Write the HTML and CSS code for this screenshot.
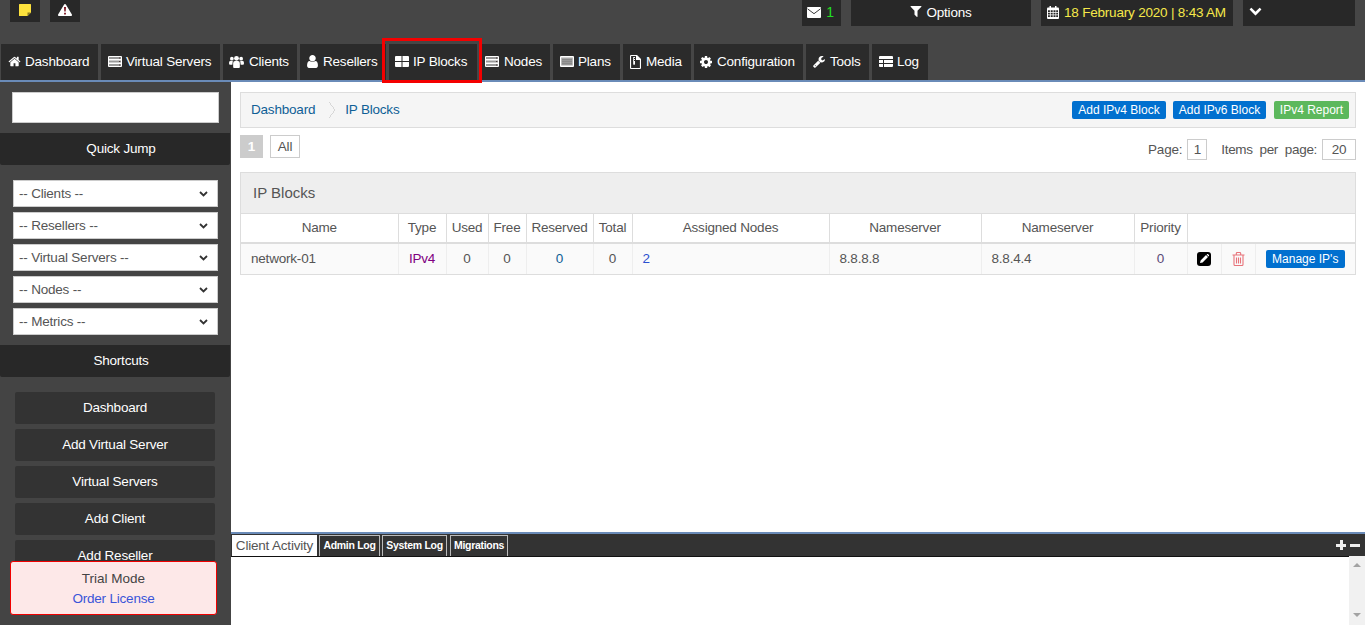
FILE: index.html
```html
<!DOCTYPE html>
<html lang="en">
<head>
<meta charset="utf-8">
<title>IP Blocks</title>
<link rel="stylesheet" href="styles.css">
</head>
<body>
<svg class="defs" width="0" height="0">
  <symbol id="i-home" viewBox="0 0 1792 1792"><path d="M1472 992v480q0 26-19 45t-45 19h-384v-384h-256v384h-384q-26 0-45-19t-19-45v-480q0-1 .5-3t.5-3l575-474 575 474q1 2 1 6zm223-69l-62 74q-8 9-21 11h-3q-13 0-21-7l-692-577-692 577q-12 8-24 7-13-2-21-11l-62-74q-8-10-7-23.5t11-21.5l719-599q32-26 76-26t76 26l244 204v-195q0-14 9-23t23-9h192q14 0 23 9t9 23v408l219 182q10 8 11 21.5t-7 23.5z"/></symbol>
  <symbol id="i-user" viewBox="256 128 1280 1536"><path d="M1536 1399q0 109-62.5 187t-150.5 78h-854q-88 0-150.5-78t-62.5-187q0-85 8.5-160.5t31.5-152 58.5-131 94-89 134.5-34.5q131 128 313 128t313-128q76 0 134.5 34.5t94 89 58.5 131 31.5 152 8.5 160.5zm-256-887q0 159-112.5 271.5t-271.5 112.5-271.5-112.5-112.5-271.5 112.5-271.5 271.5-112.5 271.5 112.5 112.5 271.5z"/></symbol>
  <symbol id="i-users" viewBox="0 0 16 14"><circle cx="3" cy="4" r="2"/><circle cx="13" cy="4" r="2"/><circle cx="8" cy="3.600" r="2.600"/><path d="M0 10V8q0-1.600 1.500-1.600h2.500L3.500 10.500H1zM16 10V8q0-1.600-1.500-1.600h-2.500l.5 4.100H15zM4.400 13V9q0-2.600 2-2.600h3.200q2 0 2 2.600v4q0 1-1 1H5.400q-1 0-1-1z"/></symbol>
  <symbol id="i-server" viewBox="0 0 14 11"><path d="M1 0h12q1 0 1 1v9q0 1-1 1H1q-1 0-1-1V1q0-1 1-1z"/><path fill="#9a9a9a" d="M1 1h12v2H1zM1 4.500h12v2H1zM1 8h12v2H1z"/><path fill="#4a3a3a" d="M11 1.500h1.200v1H11zM11 5h1.200v1H11zM11 8.500h1.200v1H11z"/></symbol>
  <symbol id="i-grid" viewBox="0 0 14 11"><path d="M1 0h5.500v5H0V1q0-1 1-1zM7.500 0H13q1 0 1 1v4H7.500zM0 6h6.500v5H1q-1 0-1-1zM7.500 6H14v4q0 1-1 1H7.500z"/></symbol>
  <symbol id="i-plans" viewBox="0 0 14 11"><path d="M1 0h12q1 0 1 1v9q0 1-1 1H1q-1 0-1-1V1q0-1 1-1z"/><path fill="#a8a8a8" d="M1.200 1.500h11.600v8H1.200z"/><path fill="#6a6a6a" d="M2 3.500h10v.8H2zM2 5.500h10v.8H2zM2 7.500h10v.8H2z"/></symbol>
  <symbol id="i-media" viewBox="0 0 11 14"><path fill-rule="evenodd" d="M0 1q0-1 1-1h6l4 4v9q0 1-1 1H1q-1 0-1-1zM1.100 1.100v11.800h8.800V5H6V1.100z"/><path d="M3.200 2h1.800v1H4v1h1v1H4v1h1v3.200a1 1 0 0 1-1.800 0z"/></symbol>
  <symbol id="i-cog" viewBox="128 128 1536 1536"><path d="M1152 896q0-106-75-181t-181-75-181 75-75 181 75 181 181 75 181-75 75-181zm512-109v222q0 12-8 23t-20 13l-185 28q-19 54-39 91 35 50 107 138 10 12 10 25t-9 23q-27 37-99 108t-94 71q-12 0-26-9l-138-108q-44 23-91 38-16 136-29 186-7 28-36 28h-222q-14 0-24.500-8.500t-11.500-21.500l-28-184q-49-16-90-37l-141 107q-10 9-25 9-14 0-25-11-126-114-165-168-7-10-7-23 0-12 8-23 15-21 51-66.500t54-70.500q-27-50-41-99l-183-27q-13-2-21-12.500t-8-23.500v-222q0-12 8-23t19-13l186-28q14-46 39-92-40-57-107-138-10-12-10-24 0-10 9-23 26-36 98.500-107.500t94.500-71.500q13 0 26 10l138 107q44-23 91-38 16-136 29-186 7-28 36-28h222q14 0 24.500 8.500t11.500 21.500l28 184q49 16 90 37l142-107q9-9 24-9 13 0 25 10 129 119 165 170 7 8 7 22 0 12-8 23-15 21-51 66.500t-54 70.500q26 50 41 98l183 28q13 2 21 12.500t8 23.500z"/></symbol>
  <symbol id="i-wrench" viewBox="64 128 1664 1664"><path d="M448 1472q0-26-19-45t-45-19-45 19-19 45 19 45 45 19 45-19 19-45zm644-420l-682 682q-37 37-90 37-52 0-91-37l-106-108q-38-36-38-90 0-53 38-91l681-681q39 98 114.500 173.500t173.500 114.500zm634-435q0 39-23 106-47 134-164.500 217.500t-258.500 83.500q-185 0-316.500-131.500t-131.500-316.500 131.500-316.500 316.500-131.500q58 0 121.500 16.500t107.500 46.500q16 11 16 28t-16 28l-293 169v224l193 107q5-3 79-48.500t135.500-81 70.500-35.500q15 0 23.500 10t8.500 25z"/></symbol>
  <symbol id="i-table" viewBox="0 0 14 11"><path d="M1 0h12q1 0 1 1v2H0V1q0-1 1-1zM0 4h4v3H0zM5 4h9v3H5zM0 8h4v3H1q-1 0-1-1zM5 8h9v2q0 1-1 1H5z"/></symbol>
  <symbol id="i-filter" viewBox="128 256 1536 1536"><path d="M1595 295q17 41-14 70l-493 493v742q0 42-39 59-13 5-25 5-27 0-45-19l-256-256q-19-19-19-45v-486l-493-493q-31-29-14-70 17-39 59-39h1280q42 0 59 39z"/></symbol>
  <symbol id="i-chevron" viewBox="0 0 1792 1792"><path d="M1683 808l-742 741q-19 19-45 19t-45-19l-742-741q-19-19-19-45.500t19-45.500l166-165q19-19 45-19t45 19l531 531 531-531q19-19 45-19t45 19l166 165q19 19 19 45.500t-19 45.500z"/></symbol>
</svg>

<header class="top">
  <div class="top-row">
    <div class="top-left">
      <span class="tool tool-small">
        <svg class="ic-note" viewBox="0 0 12 12"><path fill="#fde23d" d="M.5 0h11q.5 0 .5.5v8L8.500 12H.5q-.5 0-.5-.5V.5Q0 0 .5 0z"/><path fill="#8a7a20" d="M8.500 8.500H12L8.500 12z"/></svg>
      </span>
      <span class="tool tool-small">
        <svg class="ic-warn" viewBox="0 0 14 12"><path fill="#fff" d="M7 0q.6 0 .9.6l6 9.800q.5 1.100-.7 1.600H.8q-1.200-.5-.7-1.600L6.100.6Q6.400 0 7 0z"/><path fill="#7a1420" d="M6 3h2l-.3 4.600H6.300zM6.100 8.700h1.800v1.700H6.100z"/></svg>
      </span>
    </div>
    <div class="top-right">
      <span class="tool tool-mail">
        <svg class="ic-mail" viewBox="0 0 14 11"><path fill="#fff" d="M1 0h12q1 0 1 1v9q0 1-1 1H1q-1 0-1-1V1q0-1 1-1z"/><path fill="none" stroke="#282828" stroke-width=".9" d="M.5 1.800 7 6.700l6.500-4.900"/></svg>
        <b class="count">1</b>
      </span>
      <span class="tool tool-options"><svg class="ic ic-filter"><use href="#i-filter"/></svg>Options</span>
      <span class="tool tool-date">
        <svg class="ic-cal" viewBox="0 0 12 13"><path fill="#fff" d="M1 1.500h10q1 0 1 1V12q0 1-1 1H1q-1 0-1-1V2.500q0-1 1-1z"/><path fill="#fff" d="M2.500 0h1.500v2H2.500zM8 0h1.500v2H8z"/><path fill="#282828" d="M1 4.300h1.900v1.700H1zM3.700 4.300h2v1.700h-2zM6.500 4.300h2v1.700h-2zM9.200 4.300H11v1.700H9.200zM1 6.800h1.900v1.700H1zM3.700 6.800h2v1.700h-2zM6.500 6.800h2v1.700h-2zM9.200 6.800H11v1.700H9.200zM1 9.300h1.900V11H1zM3.700 9.300h2V11h-2zM6.500 9.300h2V11h-2zM9.200 9.300H11V11H9.200z"/></svg>
        18 February 2020 | 8:43 AM
      </span>
      <span class="tool tool-more"><svg class="ic ic-chevron"><use href="#i-chevron"/></svg></span>
    </div>
  </div>
  <nav class="tabs">
    <a class="tab tab-dashboard"><svg class="ic ic-home"><use href="#i-home"/></svg>Dashboard</a>
    <a class="tab tab-vs"><svg class="ic ic-server"><use href="#i-server"/></svg>Virtual Servers</a>
    <a class="tab tab-clients"><svg class="ic ic-users"><use href="#i-users"/></svg>Clients</a>
    <a class="tab tab-resellers"><svg class="ic ic-user"><use href="#i-user"/></svg>Resellers</a>
    <a class="tab tab-ip"><svg class="ic ic-grid"><use href="#i-grid"/></svg>IP Blocks</a>
    <a class="tab tab-nodes"><svg class="ic ic-server"><use href="#i-server"/></svg>Nodes</a>
    <a class="tab tab-plans"><svg class="ic ic-plans"><use href="#i-plans"/></svg>Plans</a>
    <a class="tab tab-media"><svg class="ic ic-media"><use href="#i-media"/></svg>Media</a>
    <a class="tab tab-config"><svg class="ic ic-cog"><use href="#i-cog"/></svg>Configuration</a>
    <a class="tab tab-tools"><svg class="ic ic-wrench"><use href="#i-wrench"/></svg>Tools</a>
    <a class="tab tab-log"><svg class="ic ic-table"><use href="#i-table"/></svg>Log</a>
  </nav>
  <div class="highlight"></div>
</header>

<div class="main">
  <aside class="side">
    <input class="search" type="text" aria-label="Search">
    <div class="side-title side-title-jump">Quick Jump</div>
    <div class="jump-list">
      <select class="jump"><option>-- Clients --</option></select>
      <select class="jump"><option>-- Resellers --</option></select>
      <select class="jump"><option>-- Virtual Servers --</option></select>
      <select class="jump"><option>-- Nodes --</option></select>
      <select class="jump"><option>-- Metrics --</option></select>
    </div>
    <div class="side-title">Shortcuts</div>
    <div class="shortcut-list">
      <a class="shortcut">Dashboard</a>
      <a class="shortcut">Add Virtual Server</a>
      <a class="shortcut">Virtual Servers</a>
      <a class="shortcut">Add Client</a>
      <a class="shortcut">Add Reseller</a>
    </div>
    <div class="trial">
      <div class="trial-title">Trial Mode</div>
      <a class="trial-link">Order License</a>
    </div>
  </aside>

  <div class="content">
    <section class="page">
      <div class="crumbs">
        <a class="crumb">Dashboard</a>
        <span class="crumb-sep"></span>
        <a class="crumb">IP Blocks</a>
        <div class="crumb-actions">
          <a class="btn btn-blue btn-v4">Add IPv4 Block</a>
          <a class="btn btn-blue btn-v6">Add IPv6 Block</a>
          <a class="btn btn-green">IPv4 Report</a>
        </div>
      </div>
      <div class="pager-row">
        <div class="pager">
          <span class="page-current">1</span>
          <a class="page-all">All</a>
        </div>
        <div class="pager-info">
          <span class="info-label">Page:</span><span class="info-box info-page">1</span>
          <span class="info-label info-items">Items&nbsp; per&nbsp; page:</span><span class="info-box info-per">20</span>
        </div>
      </div>
      <div class="panel">
        <div class="panel-head">IP Blocks</div>
        <table class="grid">
          <colgroup>
            <col class="c-name"><col class="c-type"><col class="c-used"><col class="c-free"><col class="c-res"><col class="c-total"><col class="c-nodes"><col class="c-ns"><col class="c-ns2"><col class="c-pri"><col class="c-edit"><col class="c-del"><col class="c-manage">
          </colgroup>
          <thead>
            <tr>
              <th>Name</th><th>Type</th><th>Used</th><th>Free</th><th>Reserved</th><th>Total</th><th>Assigned Nodes</th><th>Nameserver</th><th>Nameserver</th><th>Priority</th><th colspan="3"></th>
            </tr>
          </thead>
          <tbody>
            <tr>
              <td class="left">network-01</td>
              <td class="type">IPv4</td>
              <td>0</td>
              <td>0</td>
              <td class="res">0</td>
              <td>0</td>
              <td class="left nodes">2</td>
              <td class="left">8.8.8.8</td>
              <td class="left">8.8.4.4</td>
              <td class="pri">0</td>
              <td>
                <svg class="ic-edit" viewBox="0 0 14 14"><rect width="14" height="14" rx="3" fill="#000"/><path fill="#fff" d="M3 11l.6-2.600 5.400-5.400 2 2-5.400 5.400zM9.600 2.400l.6-.4q.5-.3 1 .2l.7.7q.4.5 0 1l-.4.5z"/></svg>
              </td>
              <td>
                <svg class="ic-trash" viewBox="0 0 13 14"><g fill="none" stroke="#e8737a" stroke-width="1.100"><path d="M.5 3h12M4.300 3V1.500q0-1 1-1h2.400q1 0 1 1V3M2 3v9.500q0 1 1 1h7q1 0 1-1V3"/><path d="M4.500 5.500v6M6.500 5.500v6M8.500 5.500v6"/></g></svg>
              </td>
              <td><a class="btn btn-blue btn-manage">Manage IP's</a></td>
            </tr>
          </tbody>
        </table>
      </div>
    </section>

    <section class="logs">
      <div class="log-bar">
        <a class="log-tab log-tab-active">Client Activity</a>
        <a class="log-tab log-tab-admin">Admin Log</a>
        <a class="log-tab log-tab-system">System Log</a>
        <a class="log-tab log-tab-migr">Migrations</a>
        <div class="log-tools"><span class="log-plus"></span><span class="log-minus"></span></div>
      </div>
      <div class="log-body">
        <div class="log-pane"></div>
        <div class="scrollbar"><span class="arrow-up"></span><span class="arrow-down"></span></div>
      </div>
    </section>
  </div>
</div>
</body>
</html>
```

FILE: styles.css
```css
* { box-sizing: border-box; }
html, body { margin: 0; height: 625px; overflow: hidden; }
body {
  display: flex;
  flex-direction: column;
  font-family: "Liberation Sans", Arial, sans-serif;
  font-size: 13.5px;
  letter-spacing: -0.2px;
  color: #555;
  background: #fff;
}
a { text-decoration: none; }
.defs { position: absolute; }
.ic { fill: #fff; display: block; flex: none; }

/* Top */
.top {
  position: relative;
  flex: none;
  height: 82px;
  background: #464646;
  border-bottom: 2px solid #6a8bb8;
  display: flex;
  flex-direction: column;
  justify-content: space-between;
}
.top-row { display: flex; justify-content: space-between; padding: 0 10px; }
.top-left, .top-right { display: flex; gap: 10px; align-items: flex-start; }
.tool {
  display: flex;
  align-items: center;
  justify-content: center;
  background: #282828;
  color: #fff;
  height: 26px;
  padding-bottom: 2px;
}
.tool-small { width: 30px; height: 22px; }
.ic-note { width: 12px; height: 12px; }
.ic-warn { width: 14px; height: 12px; }
.tool-mail { width: 39px; gap: 5px; padding-right: 2px; }
.ic-mail { width: 14px; height: 11px; }
.count { color: #22e022; font-weight: 400; font-size: 14px; }
.tool-options { width: 180px; gap: 4px; }
.ic-filter { width: 12px; height: 12px; }
.tool-date { width: 192px; color: #f6e84a; gap: 5px; justify-content: flex-start; padding-left: 6px; }
.ic-cal { width: 12px; height: 13px; }
.tool-more { width: 112px; justify-content: flex-start; padding: 0 0 6px 6px; }
.ic-chevron { width: 13px; height: 13px; }

.tabs { display: flex; padding-left: 1px; gap: 3px; height: 36px; }
.tab {
  display: flex;
  align-items: center;
  gap: 4px;
  padding: 0 0 1px 7px;
  background: #2b2b2b;
  color: #fff;
  font-weight: 400;
}
.tab-dashboard { width: 97px; }
.tab-vs { width: 119px; }
.tab-clients { width: 74px; gap: 5px; padding-left: 6px; }
.tab-resellers { width: 86px; gap: 5px; }
.tab-ip { width: 88px; padding-left: 6px; gap: 4px; }
.tab-nodes { width: 70px; padding-left: 5px; gap: 5px; }
.tab-plans { width: 67px; }
.tab-media { width: 68px; gap: 5px; }
.tab-config { width: 109px; padding-left: 6px; gap: 5px; }
.tab-tools { width: 63px; gap: 5px; }
.tab-log { width: 56px; }
.ic-home { width: 13px; height: 13px; }
.ic-server { width: 14px; height: 11px; }
.ic-users { width: 15px; height: 13px; }
.ic-user { width: 11px; height: 13px; }
.ic-grid { width: 14px; height: 11px; }
.ic-plans { width: 14px; height: 11px; }
.ic-media { width: 11px; height: 14px; }
.ic-cog { width: 12px; height: 12px; }
.ic-wrench { width: 12px; height: 12px; }
.ic-table { width: 14px; height: 11px; }
.highlight {
  position: absolute;
  left: 382px;
  top: 38px;
  width: 100px;
  height: 45px;
  border: 3px solid #f40000;
}

/* Main */
.main { flex: 1; display: flex; min-height: 0; }
.side {
  position: relative;
  flex: none;
  width: 231px;
  background: #444;
  overflow: hidden;
}
.search {
  display: block;
  width: 207px;
  height: 31px;
  margin: 10px 0 10px 12px;
  border: 1px solid #ccc;
  background: #fff;
}
.side-title {
  width: 230px;
  height: 32px;
  background: #282828;
  color: #fff;
  font-weight: 400;
  text-align: center;
  line-height: 31px;
  padding-left: 12px;
  border-radius: 0 0 2px 2px;
}
.jump-list {
  display: flex;
  flex-direction: column;
  gap: 5px;
  padding: 15px 0 10px 13px;
}
.jump {
  display: block;
  width: 205px;
  height: 27px;
  border: 1px solid #ccc;
  border-radius: 0;
  appearance: none;
  background: #fff url("data:image/svg+xml,%3Csvg xmlns='http://www.w3.org/2000/svg' viewBox='0 0 9 6'%3E%3Cpath fill='none' stroke='%23333' stroke-width='1.800' d='M1 1l3.500 3.500L8 1'/%3E%3C/svg%3E") no-repeat right 9px center / 9px 6px;
  color: #555;
  font-family: inherit;
  font-size: 13.5px;
  letter-spacing: -0.2px;
  padding-left: 5px;
}
.shortcut-list {
  display: flex;
  flex-direction: column;
  gap: 5px;
  padding: 15px 0 0 15px;
}
.shortcut {
  display: block;
  width: 200px;
  height: 32px;
  line-height: 31px;
  text-align: center;
  background: #333;
  color: #fff;
  border-radius: 2px;
}
.trial {
  position: absolute;
  left: 10px;
  bottom: 10px;
  width: 207px;
  height: 54px;
  background: #fde8e8;
  border: 1px solid #f00000;
  border-radius: 3px;
  text-align: center;
  padding-top: 7px;
  line-height: 20px;
}
.trial-title { color: #444; font-weight: 400; letter-spacing: 0; }
.trial-link { color: #3a55d8; }

/* Content */
.content { flex: 1; min-width: 0; display: flex; flex-direction: column; }
.page { flex: 1; padding: 10px 9px 0; min-height: 0; }
.crumbs {
  display: flex;
  align-items: center;
  height: 36px;
  background: #f5f5f5;
  border: 1px solid #ddd;
  padding: 0 6px 0 10px;
  color: #0a5a8c;
}
.crumb { color: #0f5f96; padding-bottom: 2px; }
.crumb-sep {
  width: 6px;
  height: 16px;
  margin: 0 10px 0 14px;
  background: linear-gradient(to top right, transparent 46%, #d5d5d5 47%, #d5d5d5 53%, transparent 54%) top / 100% 50% no-repeat,
              linear-gradient(to bottom right, transparent 46%, #d5d5d5 47%, #d5d5d5 53%, transparent 54%) bottom / 100% 50% no-repeat;
}
.crumb-actions { margin-left: auto; display: flex; gap: 7px; }
.btn {
  display: block;
  height: 18px;
  line-height: 18px;
  padding: 0;
  font-size: 12px;
  letter-spacing: 0;
  color: #fff;
  border-radius: 2px;
  text-align: center;
  white-space: nowrap;
}
.btn-blue { background: #0170cf; }
.btn-green { background: #5cb85c; width: 75px; margin-left: 1px; }
.btn-v4 { width: 94px; }
.btn-v6 { width: 93px; }
.pager-row { display: flex; justify-content: space-between; margin-top: 7px; height: 37px; }
.pager { display: flex; gap: 7px; align-items: flex-start; }
.page-current {
  width: 23px;
  height: 23px;
  line-height: 23px;
  background: #ccc;
  color: #fff;
  text-align: center;
  font-weight: bold;
}
.page-all {
  width: 30px;
  height: 23px;
  line-height: 21px;
  border: 1px solid #ccc;
  color: #555;
  text-align: center;
}
.pager-info { display: flex; align-items: center; height: 21px; margin-top: 4px; }
.info-box {
  height: 21px;
  line-height: 19px;
  border: 1px solid #ccc;
  text-align: center;
  margin-left: 5px;
}
.info-page { width: 20px; }
.info-per { width: 34px; }
.info-items { margin-left: 14px; letter-spacing: -0.33px; }

.panel { border: 1px solid #ddd; }
.panel-head {
  height: 41px;
  line-height: 40px;
  padding-left: 12px;
  font-size: 15px;
  letter-spacing: 0;
  background: #eee;
  border-bottom: 1px solid #ddd;
  color: #555;
}
.grid { width: 100%; table-layout: fixed; border-collapse: collapse; }
.c-name { width: 157px; }
.c-type { width: 48px; }
.c-used { width: 42px; }
.c-free { width: 38px; }
.c-res { width: 67px; }
.c-total { width: 39px; }
.c-nodes { width: 197px; }
.c-ns { width: 152px; }
.c-ns2 { width: 153px; }
.c-pri { width: 53px; }
.c-edit { width: 34px; }
.c-del { width: 34px; }
.grid th {
  height: 29px;
  font-weight: 400;
  text-align: center;
  padding: 0 0 1px;
  border-left: 1px solid #ddd;
  border-bottom: 2px solid #ddd;
  color: #555;
}
.grid th:first-child, .grid td:first-child { border-left: 0; }
.grid td {
  height: 31px;
  padding: 0 0 1px;
  text-align: center;
  border-left: 1px solid #eee;
  background: #fafafa;
  white-space: nowrap;
}
.grid td.left { text-align: left; padding-left: 10px; }
.grid td.type { color: #800080; }
.grid td.res { color: #0f5f96; }
.grid td.nodes { color: #2a50d0; }
.grid td.pri { color: #5a4a78; }
.ic-edit { display: block; width: 14px; height: 14px; margin: 0 auto; }
.ic-trash { display: block; width: 13px; height: 14px; margin: 0 auto; }
.btn-manage { width: 79px; margin: 0 auto; }

/* Logs */
.logs { flex: none; height: 93px; display: flex; flex-direction: column; }
.log-bar {
  flex: none;
  height: 24px;
  display: flex;
  align-items: flex-end;
  padding-left: 1px;
  background: #333;
  border-top: 2px solid #6a8bb8;
}
.log-tab {
  flex: none;
  height: 21px;
  line-height: 19px;
  font-size: 10.5px;
  font-weight: bold;
  letter-spacing: -0.3px;
  text-align: center;
  white-space: nowrap;
  color: #fff;
  background: #333;
  border: 1px solid #bbb;
  border-bottom: 0;
}
.log-tab-active {
  width: 85px;
  font-size: 13.5px;
  letter-spacing: -0.2px;
  font-weight: 400;
  color: #555;
  background: #fff;
  border-color: #fff;
  margin-right: 2px;
}
.log-tab-admin { width: 61px; margin-right: 2px; }
.log-tab-system { width: 65px; margin-right: 3px; }
.log-tab-migr { width: 58px; }
.log-tools { margin-left: auto; display: flex; align-items: center; gap: 4px; align-self: center; padding-right: 5px; }
.log-plus, .log-minus { display: block; width: 10px; height: 10px; }
.log-plus { background: linear-gradient(#eee, #eee) center / 10px 3px no-repeat, linear-gradient(#eee, #eee) center / 3px 10px no-repeat; }
.log-minus { background: linear-gradient(#eee, #eee) center / 10px 3px no-repeat; }
.log-body { flex: 1; display: flex; background: #fff; min-height: 0; }
.log-pane { flex: 1; border-top: 1px solid #111; }
.scrollbar {
  flex: none;
  width: 16px;
  background: #f1f1f1;
  display: flex;
  flex-direction: column;
  justify-content: space-between;
  align-items: center;
  padding: 7px 0 8px;
}
.arrow-up, .arrow-down {
  display: block;
  width: 0;
  height: 0;
  border-left: 4px solid transparent;
  border-right: 4px solid transparent;
}
.arrow-up { border-bottom: 4px solid #a3a3a3; }
.arrow-down { border-top: 4px solid #a3a3a3; }
```
